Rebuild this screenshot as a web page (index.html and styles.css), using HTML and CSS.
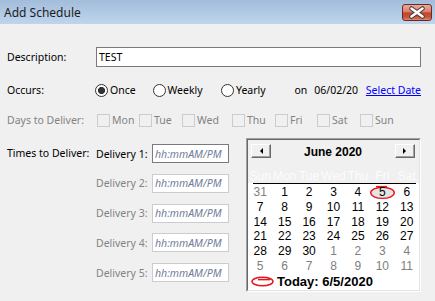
FILE: index.html
```html
<!DOCTYPE html>
<html lang="en">
<head>
  <meta charset="UTF-8" />
  <title>Add Schedule</title>
  <link rel="stylesheet" href="styles.css">
</head>
<body>
  <div class="titlebar">
    <span class="title">Add Schedule</span>
    <span class="close">
      <svg width="30" height="17" viewBox="0 0 30 17">
        <path d="M9.5 4.5 L20.5 12.5 M20.5 4.5 L9.5 12.5" stroke="#4a3a38" stroke-width="4.6" stroke-linecap="round" />
        <path d="M9.5 4.5 L20.5 12.5 M20.5 4.5 L9.5 12.5" stroke="#fff" stroke-width="2.6" stroke-linecap="round" />
      </svg>
    </span>
  </div>

  <div class="form">
    <div class="row">
      <span class="lbl">Description:</span>
      <input class="textbox" type="text" value="TEST">
    </div>

    <div class="row occurs">
      <span class="lbl">Occurs:</span>
      <span class="radio checked w-once">Once</span>
      <span class="radio w-weekly">Weekly</span>
      <span class="radio w-yearly">Yearly</span>
      <span class="w-on">on</span>
      <span class="w-date">06/02/20</span>
      <a class="link" href="#">Select Date</a>
    </div>

    <div class="row days">
      <span class="lbl disabled">Days to Deliver:</span>
      <div class="checks">
        <span class="check">Mon</span>
        <span class="check">Tue</span>
        <span class="check">Wed</span>
        <span class="check">Thu</span>
        <span class="check">Fri</span>
        <span class="check">Sat</span>
        <span class="check">Sun</span>
      </div>
    </div>

    <div class="bottom">
      <span class="lbl times">Times to Deliver:</span>
      <div class="deliveries">
        <span>Delivery 1:</span>
        <input class="time" type="text" placeholder="hh:mmAM/PM">
        <span class="disabled">Delivery 2:</span>
        <input class="time off" type="text" placeholder="hh:mmAM/PM">
        <span class="disabled">Delivery 3:</span>
        <input class="time off" type="text" placeholder="hh:mmAM/PM">
        <span class="disabled">Delivery 4:</span>
        <input class="time off" type="text" placeholder="hh:mmAM/PM">
        <span class="disabled">Delivery 5:</span>
        <input class="time off" type="text" placeholder="hh:mmAM/PM">
      </div>

      <div class="calendar">
        <div class="cal-inner">
          <div class="cal-head">
            <span class="cal-btn"><i class="tri-left"></i></span>
            <span class="cal-title">June 2020</span>
            <span class="cal-btn"><i class="tri-right"></i></span>
          </div>
          <div class="cal-names">
            <span>Sun</span><span>Mon</span><span>Tue</span><span>Wed</span><span>Thu</span><span>Fri</span><span>Sat</span>
          </div>
          <div class="cal-rule"></div>
          <div class="cal-grid">
            <span class="g">31</span><span>1</span><span>2</span><span>3</span><span>4</span>
            <span class="today">
              <svg width="26" height="15" viewBox="0 0 26 15">
                <ellipse cx="12.5" cy="7.8" rx="11.8" ry="5.6" fill="#e4e4e4" stroke="#e8121b" stroke-width="1.4" />
                <path d="M6 1.6 L17 1.6" stroke="#e8121b" stroke-width="1.4" />
              </svg>
              <b>5</b>
            </span>
            <span>6</span>
            <span>7</span><span>8</span><span>9</span><span>10</span><span>11</span><span>12</span><span>13</span>
            <span>14</span><span>15</span><span>16</span><span>17</span><span>18</span><span>19</span><span>20</span>
            <span>21</span><span>22</span><span>23</span><span>24</span><span>25</span><span>26</span><span>27</span>
            <span>28</span><span>29</span><span>30</span><span class="g">1</span><span class="g">2</span><span class="g">3</span><span class="g">4</span>
            <span class="g">5</span><span class="g">6</span><span class="g">7</span><span class="g">8</span><span class="g">9</span><span class="g">10</span><span class="g">11</span>
          </div>
          <div class="cal-today">
            <svg width="23" height="11" viewBox="0 0 23 11">
              <ellipse cx="11.5" cy="5.5" rx="10.5" ry="4.3" fill="none" stroke="#e8121b" stroke-width="1.5" />
              <path d="M7 3.6 L19 3.6" stroke="#e8121b" stroke-width="1.5" />
            </svg>
            <span>Today: 6/5/2020</span>
          </div>
        </div>
      </div>
    </div>
  </div>
</body>
</html>
```

FILE: styles.css
```css
body {
  margin: 0;
  background: #f0f0f0;
  font-family: "Noto Sans", sans-serif;
  font-size: 10.5px;
  color: #000;
  white-space: nowrap;
}
.titlebar {
  height: 24px;
  background: linear-gradient(#a2bcda, #bfd5ed);
  display: flex;
  align-items: center;
  justify-content: space-between;
  padding: 0 3px 0 4px;
}
.title {
  font-size: 12px;
  color: #1c1c1c;
}
.close {
  width: 30px;
  height: 17px;
  margin-top: 1px;
  box-sizing: border-box;
  border: 1px solid #70291f;
  border-radius: 3px;
  background: linear-gradient(#e8ab9c 0%, #d9826d 45%, #c4452d 52%, #c5533a 80%, #d98a72 100%);
  display: flex;
  align-items: center;
  justify-content: center;
  overflow: hidden;
}
.close svg {
  flex: none;
}
.form {
  padding: 23px 14px 0 7px;
}
.row {
  display: flex;
  align-items: center;
  height: 20px;
}
.lbl {
  width: 89px;
  flex: none;
}
.disabled {
  color: #838383;
}
.textbox {
  width: 325px;
  height: 20px;
  box-sizing: border-box;
  border: 1px solid #7a7a7a;
  padding: 0 2px;
  margin: 0;
  font-family: "Noto Sans", sans-serif;
  font-size: 10.5px;
  background: #fff;
  outline: none;
}
.occurs {
  margin-top: 13px;
}
.occurs .lbl {
  width: 88px;
}
.radio {
  display: flex;
  align-items: center;
}
.radio::before {
  content: "";
  width: 13px;
  height: 13px;
  box-sizing: border-box;
  border: 1px solid #333;
  border-radius: 50%;
  background: #fff;
  margin-right: 2px;
}
.radio.checked::before {
  background: radial-gradient(circle, #333 3.2px, #fff 3.9px);
}
.w-once { width: 58px; }
.w-weekly { width: 69px; }
.w-yearly { width: 74px; }
.w-on { width: 20px; }
.w-date { width: 52px; }
.link {
  color: #0000ff;
  text-decoration: underline;
}
.days {
  margin-top: 10px;
}
.checks {
  display: grid;
  grid-template-columns: 42px 43px 50px 43px 42px 43px auto;
  margin-left: 1px;
  color: #838383;
}
.check {
  display: flex;
  align-items: center;
}
.check::before {
  content: "";
  width: 13px;
  height: 13px;
  box-sizing: border-box;
  border: 1px solid #cccccc;
  margin-right: 2px;
}
.bottom {
  display: flex;
  align-items: flex-start;
  margin-top: 8px;
}
.times {
  padding-top: 6px;
  line-height: 19px;
}
.deliveries {
  display: grid;
  grid-template-columns: 56px 77px;
  grid-auto-rows: 19px;
  row-gap: 10.8px;
  padding-top: 6px;
  align-items: center;
}
.time {
  width: 77px;
  height: 19px;
  box-sizing: border-box;
  border: 1px solid #7a7a7a;
  background: #fff;
  margin: 0;
  padding: 0 2px;
  font-family: "Noto Sans", sans-serif;
  font-size: 10.5px;
  outline: none;
}
.time.off {
  border-color: #cccccc;
}
.time::placeholder {
  color: #6f7c97;
  font-style: italic;
}
.calendar {
  margin-left: 17px;
  width: 179px;
  box-sizing: border-box;
  border: 1px solid;
  border-color: #a0a0a0 #ffffff #ffffff #a0a0a0;
  font-family: "Liberation Sans", Arial, sans-serif;
  font-size: 12px;
}
.cal-inner {
  border: 1px solid;
  border-color: #696969 #e3e3e3 #e3e3e3 #696969;
  background: #fff;
}
.cal-head {
  height: 30px;
  box-sizing: border-box;
  padding: 4px 4px 0 3px;
  background: #f0f0f0;
  display: flex;
  justify-content: space-between;
  align-items: flex-start;
}
.cal-btn {
  width: 20px;
  height: 14px;
  box-sizing: border-box;
  border: 1px solid;
  border-color: #ffffff #696969 #696969 #ffffff;
  box-shadow: inset -1px -1px 0 #a0a0a0;
  background: #f0f0f0;
  display: flex;
  align-items: center;
  justify-content: center;
}
.tri-left {
  border-top: 3px solid transparent;
  border-bottom: 3px solid transparent;
  border-right: 3px solid #000;
}
.tri-right {
  border-top: 3px solid transparent;
  border-bottom: 3px solid transparent;
  border-left: 3px solid #000;
}
.cal-title {
  font-weight: bold;
  line-height: 15px;
  margin-top: 1px;
}
.cal-names {
  display: grid;
  grid-template-columns: repeat(7, 1fr);
  height: 13px;
  line-height: 13px;
  background: #f0f0f0;
  color: #fcfcfc;
  text-align: center;
}
.cal-rule {
  height: 1px;
  background: #000;
  margin: 0 3px 0 5px;
}
.cal-grid {
  display: grid;
  grid-template-columns: repeat(7, 1fr);
  grid-auto-rows: 14.8px;
  line-height: 14.8px;
  padding-top: 1px;
  text-align: center;
}
.cal-grid .g {
  color: #808080;
}
.today {
  position: relative;
}
.today svg {
  position: absolute;
  left: 0;
  top: 0;
}
.today b {
  position: relative;
  font-weight: normal;
}
.cal-today {
  height: 16px;
  display: flex;
  align-items: center;
  padding-left: 3px;
  font-weight: bold;
  font-size: 13px;
}
.cal-today svg {
  margin-right: 3px;
}
```
